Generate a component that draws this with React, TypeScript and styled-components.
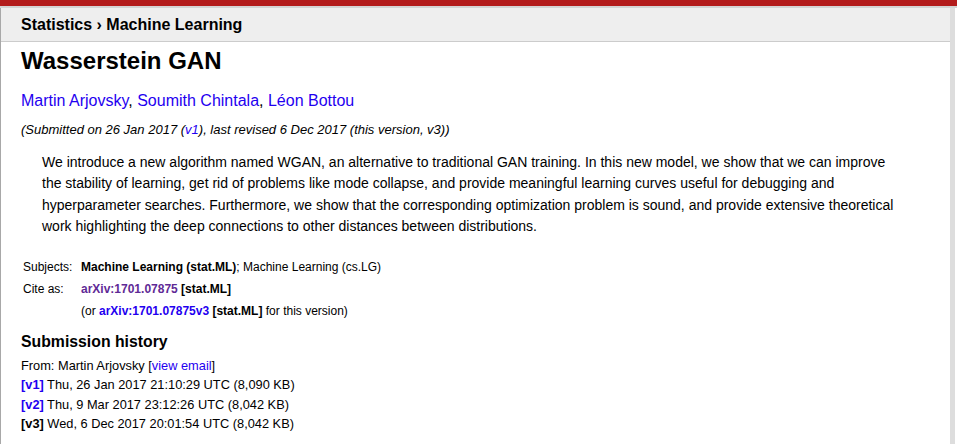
import styled, { createGlobalStyle } from "styled-components";

const GlobalStyle = createGlobalStyle`
  html, body {
    margin: 0;
    padding: 0;
    background: #fff;
  }
  body {
    font-family: "Liberation Sans", Arial, Helvetica, sans-serif;
    font-size: 14px;
    color: #000;
  }
  a {
    text-decoration: none;
  }
`;

const history = [
  { v: "v1", date: "Thu, 26 Jan 2017 21:10:29 UTC (8,090 KB)", link: true },
  { v: "v2", date: "Thu, 9 Mar 2017 23:12:26 UTC (8,042 KB)", link: true },
  { v: "v3", date: "Wed, 6 Dec 2017 20:01:54 UTC (8,042 KB)", link: false },
];

function App() {
  return (
    <>
      <GlobalStyle />
      <Masthead />
      <Layout>
        <Main>
          <Breadcrumb>
            Statistics <Chevron>›</Chevron> Machine Learning
          </Breadcrumb>
          <Content>
            <Title>Wasserstein GAN</Title>
            <Authors>
              <Link href="#">Martin Arjovsky</Link>,{" "}
              <Link href="#">Soumith Chintala</Link>,{" "}
              <Link href="#">Léon Bottou</Link>
            </Authors>
            <Dateline>
              (Submitted on 26 Jan 2017 (<Link href="#">v1</Link>), last revised
              6 Dec 2017 (this version, v3))
            </Dateline>
            <Abstract>
              We introduce a new algorithm named WGAN, an alternative to
              traditional GAN training. In this new model, we show that we can
              improve the stability of learning, get rid of problems like mode
              collapse, and provide meaningful learning curves useful for
              debugging and hyperparameter searches. Furthermore, we show that
              the corresponding optimization problem is sound, and provide
              extensive theoretical work highlighting the deep connections to
              other distances between distributions.
            </Abstract>
            <MetaTable>
              <MetaLabel>Subjects:</MetaLabel>
              <MetaValue>
                <b>Machine Learning (stat.ML)</b>; Machine Learning (cs.LG)
              </MetaValue>
              <MetaLabel>Cite as:</MetaLabel>
              <MetaValue>
                <BoldLink href="#" $visited>
                  arXiv:1701.07875
                </BoldLink>{" "}
                <b>[stat.ML]</b>
              </MetaValue>
              <MetaLabel />
              <MetaValue>
                (or <BoldLink href="#">arXiv:1701.07875v3</BoldLink>{" "}
                <b>[stat.ML]</b> for this version)
              </MetaValue>
            </MetaTable>
            <HistoryTitle>Submission history</HistoryTitle>
            <HistoryList>
              <HistoryRow>
                From: Martin Arjovsky [<Link href="#">view email</Link>]
              </HistoryRow>
              {history.map((h) => (
                <HistoryRow key={h.v}>
                  {h.link ? (
                    <BoldLink href="#">[{h.v}]</BoldLink>
                  ) : (
                    <b>[{h.v}]</b>
                  )}{" "}
                  {h.date}
                </HistoryRow>
              ))}
            </HistoryList>
          </Content>
        </Main>
        <Gutter />
      </Layout>
    </>
  );
}

export default App;

const Masthead = styled.div`
  height: 6px;
  background: #b31b1b;
  border-bottom: 2px solid #d4d4d4;
`;

const Layout = styled.div`
  display: flex;
  align-items: stretch;
  min-height: 436px;
`;

const Main = styled.div`
  flex: 0 0 949px;
  border-left: 1px solid #a8a8a8;
`;

const Gutter = styled.div`
  flex: 0 0 5px;
  background: #dddddd;
`;

const Breadcrumb = styled.div`
  height: 33px;
  display: flex;
  align-items: center;
  padding-left: 20px;
  background: #eeeeee;
  border-bottom: 1px solid #cccccc;
  font-size: 16px;
  font-weight: bold;
  white-space: pre;
`;

const Chevron = styled.span`
  font-size: 16px;
`;

const Content = styled.div`
  padding: 0 20px;
`;

const Title = styled.h1`
  margin: 4px 0 0;
  font-size: 24px;
  line-height: 29px;
  font-weight: bold;
`;

const Link = styled.a`
  color: #1f00f0;
`;

const BoldLink = styled.a<{ $visited?: boolean }>`
  color: ${(p) => (p.$visited ? "#5f2a96" : "#1f00f0")};
  font-weight: bold;
`;

const Authors = styled.div`
  margin-top: 16px;
  font-size: 16px;
  line-height: 20px;
`;

const Dateline = styled.div`
  margin-top: 11px;
  font-size: 13px;
  line-height: 15px;
  font-style: italic;
`;

const Abstract = styled.blockquote`
  margin: 15px 0 0 21px;
  width: 860px;
  font-size: 14px;
  line-height: 21.3px;
`;

const MetaTable = styled.div`
  margin-top: 19px;
  display: grid;
  grid-template-columns: 60px 1fr;
  grid-auto-rows: 22px;
  align-items: center;
  font-size: 12px;
`;

const MetaLabel = styled.div`
  padding-left: 2px;
`;

const MetaValue = styled.div``;

const HistoryTitle = styled.h2`
  margin: 10px 0 0;
  font-size: 15.8px;
  line-height: 19px;
  font-weight: bold;
`;

const HistoryList = styled.div`
  margin-top: 5px;
  font-size: 12.8px;
  line-height: 19.3px;
`;

const HistoryRow = styled.div``;
